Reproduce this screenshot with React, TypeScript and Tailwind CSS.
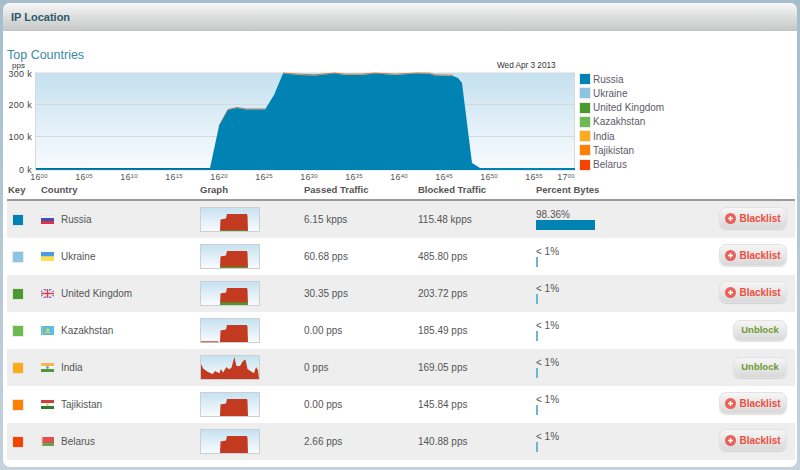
const blue = "#0083b3";

const mainArea =
  "36,168 210,168 219,126 228,110 237,108 246,109.5 265,109.5 274,95 283,73.5 300,75 315,75.5 335,73.5 345,75 362,75 375,73.5 395,75 417,73.5 430,74 435,75.5 453,76 458,78 462,83 472,163 480,168 575,168 575,170 36,170";

const ticks: [number, string, string][] = [
  [39, "16", "00"],
  [84, "16", "05"],
  [129, "16", "10"],
  [174, "16", "15"],
  [219, "16", "20"],
  [264, "16", "25"],
  [309, "16", "30"],
  [354, "16", "35"],
  [399, "16", "40"],
  [444, "16", "45"],
  [489, "16", "50"],
  [534, "16", "55"],
  [566, "17", "00"],
];

function MainChart() {
  return (
    <svg width={570} height={118} viewBox="7 62 570 118" className="block shrink-0" style={{ fontFamily: "'Liberation Sans', Arial, sans-serif" }}>
      <defs>
        <linearGradient id="plot" x1="0" y1="0" x2="0" y2="1">
          <stop offset="0" stopColor="#c5e1f0" />
          <stop offset="1" stopColor="#fafcfe" />
        </linearGradient>
      </defs>
      <rect x={36} y={73} width={539} height={97} fill="url(#plot)" />
      {[73, 104.5, 136.5, 170].map((y) => (
        <line key={y} x1={36} x2={575} y1={y} y2={y} stroke="#d6d8da" strokeWidth={1} />
      ))}
      <line x1={35.5} x2={35.5} y1={72.5} y2={170} stroke="#d6d8da" />
      <line x1={574.5} x2={574.5} y1={72.5} y2={170} stroke="#d6d8da" />
      <polyline points="283,73 300,74.2 315,74.8 335,73 345,74.2 362,74.2 375,73 395,74.2 417,73 430,73.2 435,74.8 453,75.2" fill="none" stroke="#c9773a" strokeWidth={1} />
      <polyline points="219,126 228,109.5 237,107.5 246,109 265,109" fill="none" stroke="#a0603a" strokeWidth={0.8} />
      <polygon points={mainArea} fill={blue} />
      <line x1={36} x2={210} y1={168.5} y2={168.5} stroke="#00709a" />
      <text x={12} y={67.5} fontSize={8} fill="#333">pps</text>
      {[
        [76.5, "300 k"],
        [108, "200 k"],
        [140, "100 k"],
        [173, "0 k"],
      ].map(([y, t]) => (
        <text key={t as string} x={32} y={y as number} fontSize={9} fill="#444" textAnchor="end" letterSpacing={0.3}>
          {t}
        </text>
      ))}
      <text x={497} y={68} fontSize={8.2} fill="#333">Wed Apr 3 2013</text>
      {ticks.map(([x, h, m]) => (
        <text key={h + m + x} x={x} y={179.5} fontSize={9} fill="#555" textAnchor="middle" letterSpacing={0.2}>
          {h}
          <tspan fontSize={6} dy={-2}>{m}</tspan>
        </text>
      ))}
    </svg>
  );
}

const flat = "19,23 19.5,11.5 22,11 25,10.5 26,6 46,6 46.5,8 47,23";
const india =
  "0,23 0,8 2.3,12.7 7,16 11.7,18 14,15 18.3,17.3 20,13 22,16.5 25.5,11 28,13.5 30.5,11.5 33.3,1 35.5,10 39,10 42,5 44.5,3.5 46.5,13 51,16 53,17.3 55,11 57,14 58,23";

type Row = {
  key: string;
  name: string;
  flag: string;
  passed: string;
  blocked: string;
  pct: string;
  barW: number;
  action: "Blacklist" | "Unblock";
  green: string;
  line?: boolean;
};

const rows: Row[] = [
  { key: blue, name: "Russia", flag: "ru", passed: "6.15 kpps", blocked: "115.48 kpps", pct: "98.36%", barW: 59, action: "Blacklist", green: "19,23 19,22.3 47,22.3 47,23" },
  { key: "#8cc4e4", name: "Ukraine", flag: "ua", passed: "60.68 pps", blocked: "485.80 pps", pct: "< 1%", barW: 1.5, action: "Blacklist", green: "19,23 19,21.8 47,21.8 47,23" },
  { key: "#4a9a2c", name: "United Kingdom", flag: "gb", passed: "30.35 pps", blocked: "203.72 pps", pct: "< 1%", barW: 1.5, action: "Blacklist", green: "19,23 19,20.6 47,20.6 47,23" },
  { key: "#6cbb50", name: "Kazakhstan", flag: "kz", passed: "0.00 pps", blocked: "185.49 pps", pct: "< 1%", barW: 1.5, action: "Unblock", green: "", line: true },
  { key: "#ffab19", name: "India", flag: "in", passed: "0 pps", blocked: "169.05 pps", pct: "< 1%", barW: 1.5, action: "Unblock", green: "" },
  { key: "#ff8000", name: "Tajikistan", flag: "tj", passed: "0.00 pps", blocked: "145.84 pps", pct: "< 1%", barW: 1.5, action: "Blacklist", green: "" },
  { key: "#f54400", name: "Belarus", flag: "by", passed: "2.66 pps", blocked: "140.88 pps", pct: "< 1%", barW: 1.5, action: "Blacklist", green: "" },
];

function Spark({ row, id }: { row: Row; id: number }) {
  return (
    <svg width={60} height={25} viewBox="-1 -1 60 25" className="block">
      <defs>
        <linearGradient id={`sp${id}`} x1="0" y1="0" x2="0" y2="1">
          <stop offset="0" stopColor="#c5e1f0" />
          <stop offset="1" stopColor="#fafcfe" />
        </linearGradient>
      </defs>
      <rect x={-0.5} y={-0.5} width={59} height={24} fill={`url(#sp${id})`} stroke="#ccd0d2" />
      {row.line && <rect x={0} y={22.3} width={17} height={0.9} fill="#c23a20" />}
      <polygon points={row.name === "India" ? india : flat} fill="#c23a20" />
      {row.green && <polygon points={row.green} fill="#4a9a2c" />}
    </svg>
  );
}

function Flag({ code }: { code: string }) {
  const bands: Record<string, string[]> = {
    ru: ["#f4f4f8", "#3a4fc0", "#e03040"],
    ua: ["#4a9ae8", "#ffe040"],
    in: ["#f8b850", "#f4f4f4", "#4a9a3a"],
    tj: ["#c84040", "#f8f8f0", "#2f7a35"],
    by: ["#e05050", "#e05050", "#60a850"],
  };
  return (
    <svg width={13} height={9} viewBox="0 0 13 9" className="block shrink-0">
      {code === "gb" ? (
        <>
          <rect width={13} height={9} fill="#7080b8" />
          <path d="M0 0L13 9M13 0L0 9" stroke="#f0e8ee" strokeWidth={2} />
          <path d="M6.5 0V9M0 4.5H13" stroke="#f4f0f4" strokeWidth={3} />
          <path d="M6.5 0V9M0 4.5H13" stroke="#d84050" strokeWidth={1.5} />
        </>
      ) : code === "kz" ? (
        <>
          <rect width={13} height={9} fill="#56bfe8" />
          <circle cx={6.8} cy={4} r={1.8} fill="#e0d050" />
          <rect x={4} y={6} width={5.5} height={1} fill="#e0d050" />
          <rect x={1} y={0} width={1} height={9} fill="#a8c880" />
        </>
      ) : (
        <>
          {bands[code].map((c, i) => (
            <rect key={i} x={0} y={(i * 9) / bands[code].length} width={13} height={9 / bands[code].length + 0.1} fill={c} />
          ))}
          {code === "in" && <circle cx={6.5} cy={4.5} r={1.4} fill="#8890b8" />}
          {code === "tj" && <circle cx={6.5} cy={4.5} r={1.3} fill="#e8c860" />}
          {code === "by" && <rect x={0} y={0} width={1.5} height={9} fill="#f4d0d0" />}
          {code === "ru" && <rect x={0} y={0} width={13} height={0.6} fill="#dddde4" />}
        </>
      )}
    </svg>
  );
}

function ActionButton({ action }: { action: Row["action"] }) {
  if (action === "Unblock") {
    return (
      <button className="flex h-[21px] w-[54px] items-center justify-center rounded-[7px] border border-[#e2e2e2] bg-gradient-to-b from-[#f6f6f6] to-[#d9d9d9] text-[9.5px] font-bold text-[#6f9a30] shadow-[0_1px_1px_rgba(0,0,0,0.12)]">
        Unblock
      </button>
    );
  }
  return (
    <button className="mb-[3px] flex h-[22px] w-[68px] items-center justify-center gap-[3px] rounded-[7px] border border-[#e2e2e2] bg-gradient-to-b from-[#f6f6f6] to-[#d9d9d9] text-[10px] font-bold text-[#ec4f40] shadow-[0_1px_1px_rgba(0,0,0,0.12)]">
      <svg width={11} height={11} viewBox="0 0 11 11" className="block shrink-0">
        <circle cx={5.5} cy={5.5} r={5.5} fill="#e8625a" />
        <path d="M5.5 3V8M3 5.5H8" stroke="#fff" strokeWidth={1.5} />
      </svg>
      Blacklist
    </button>
  );
}

export default function App() {
  return (
    <div
      className="h-[470px] w-[800px] overflow-hidden bg-gradient-to-b from-[#a6bdcc] to-[#c3d2dd] pl-[3px] pr-[3px] pt-[3px] text-[#555]"
      style={{ fontFamily: "'Liberation Sans', Arial, sans-serif" }}
    >
      <div className="flex h-[464px] w-[794px] flex-col overflow-hidden rounded-[7px] bg-white">
        <div className="flex h-[28px] shrink-0 items-center border-b border-[#c2c5c3] bg-gradient-to-b from-[#f6f7f6] to-[#c6c9c7] pl-[8px] pt-[2px] text-[11px] font-bold text-[#2b5a6b]">
          IP Location
        </div>
        <div className="flex flex-1 flex-col pl-[4px] pr-[2px]">
          <div className="mt-[17px] h-[14px] text-[12.5px] leading-[15px] text-[#3a8aa8]">Top Countries</div>
          <div className="flex">
            <MainChart />
            <div className="ml-[3px] mt-[10px] flex flex-col">
              {rows.map((r) => (
                <div key={r.name} className="flex h-[14.25px] items-center gap-[3px] text-[10px] text-[#5f5a68]">
                  <span className="block h-[10px] w-[10px] shrink-0 shadow-[0_0_0_1px_rgba(225,225,225,0.7)]" style={{ backgroundColor: r.key }} />
                  {r.name}
                </div>
              ))}
            </div>
          </div>
          <div className="grid h-[21px] shrink-0 grid-cols-[34px_159px_104px_114px_118px_1fr] items-center border-b-2 border-[#9a9a9a] text-[9.5px] font-bold leading-none text-[#555]">
            <div className="pl-[1px]">Key</div>
            <div>Country</div>
            <div>Graph</div>
            <div>Passed Traffic</div>
            <div>Blocked Traffic</div>
            <div>Percent Bytes</div>
          </div>
          {rows.map((r, i) => (
            <div
              key={r.name}
              className={`grid h-[37px] shrink-0 grid-cols-[34px_159px_104px_114px_118px_1fr] items-center text-[10px] text-[#555] ${i % 2 === 0 ? "bg-[#eeeeee]" : "bg-white"}`}
            >
              <div className="pl-[6px]">
                <span className="block h-[10px] w-[10px] shadow-[0_0_0_1px_rgba(225,225,225,0.7)]" style={{ backgroundColor: r.key }} />
              </div>
              <div className="flex items-center gap-[7px]">
                <Flag code={r.flag} />
                <span>{r.name}</span>
              </div>
              <Spark row={r} id={i} />
              <div>{r.passed}</div>
              <div>{r.blocked}</div>
              <div className="flex items-center justify-between pr-[8px]">
                <div className="flex flex-col">
                  <span className="h-[12px] text-[10px] leading-[12px]">{r.pct}</span>
                  <span className="-mt-[1px] mb-[1px] block h-[10px]" style={{ width: r.barW, backgroundColor: i === 0 ? blue : "#6fb6d6" }} />
                </div>
                <ActionButton action={r.action} />
              </div>
            </div>
          ))}
        </div>
      </div>
    </div>
  );
}
